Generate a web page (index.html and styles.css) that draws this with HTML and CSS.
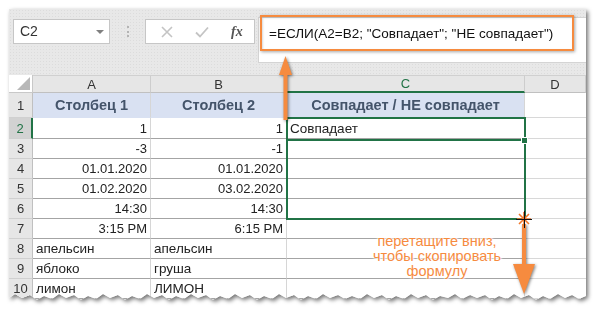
FILE: index.html
```html
<!DOCTYPE html>
<html lang="ru">
<head>
<meta charset="UTF-8">
<title>ЕСЛИ</title>
<link rel="stylesheet" href="styles.css">
</head>
<body>
<div class="scene">

<div class="shadow">
<div class="window">

    <div class="toolbar">
        <div class="name-box">C2<span class="caret"></span></div>
        <div class="sep"><span class="dots"></span></div>
        <div class="func-box">
            <svg class="ico" width="14" height="14" viewBox="0 0 14 14"><path d="M2 2L12 12M12 2L2 12" stroke="#c4c4c4" stroke-width="1.6" fill="none"/></svg>
            <svg class="ico" width="16" height="14" viewBox="0 0 16 14"><path d="M2 7.5L6 11.5L14 2.5" stroke="#c4c4c4" stroke-width="1.8" fill="none"/></svg>
            <span class="fx">fx</span>
        </div>
        <div class="formula">=ЕСЛИ(A2=B2; "Совпадает"; "НЕ совпадает")</div>
    </div>

    <div class="sheet">
        <div class="corner"></div>
        <div class="col-head">A</div>
        <div class="col-head">B</div>
        <div class="col-head active">C</div>
        <div class="col-head">D</div>

        <div class="row-head">1</div>
        <div class="cell title">Столбец 1</div>
        <div class="cell title">Столбец 2</div>
        <div class="cell title">Совпадает / НЕ совпадает</div>
        <div class="cell empty"></div>

        <div class="row-head active">2</div>
        <div class="cell num">1</div>
        <div class="cell num">1</div>
        <div class="cell">Совпадает</div>
        <div class="cell empty"></div>

        <div class="row-head">3</div>
        <div class="cell num">-3</div>
        <div class="cell num">-1</div>
        <div class="cell"></div>
        <div class="cell empty"></div>

        <div class="row-head">4</div>
        <div class="cell num">01.01.2020</div>
        <div class="cell num">01.01.2020</div>
        <div class="cell"></div>
        <div class="cell empty"></div>

        <div class="row-head">5</div>
        <div class="cell num">01.02.2020</div>
        <div class="cell num">03.02.2020</div>
        <div class="cell"></div>
        <div class="cell empty"></div>

        <div class="row-head">6</div>
        <div class="cell num">14:30</div>
        <div class="cell num">14:30</div>
        <div class="cell"></div>
        <div class="cell empty"></div>

        <div class="row-head">7</div>
        <div class="cell num">3:15 PM</div>
        <div class="cell num">6:15 PM</div>
        <div class="cell"></div>
        <div class="cell empty"></div>

        <div class="row-head">8</div>
        <div class="cell">апельсин</div>
        <div class="cell">апельсин</div>
        <div class="cell"></div>
        <div class="cell empty"></div>

        <div class="row-head">9</div>
        <div class="cell">яблоко</div>
        <div class="cell">груша</div>
        <div class="cell"></div>
        <div class="cell empty"></div>

        <div class="row-head">10</div>
        <div class="cell">лимон</div>
        <div class="cell">ЛИМОН</div>
        <div class="cell"></div>
        <div class="cell empty"></div>
    </div>

</div>
</div>

<!-- overlays -->
<div class="formula-mark"></div>
<div class="selection"><div class="active-cell"></div><span class="handle"></span></div>
<div class="hint">перетащите вниз,<br>чтобы скопировать<br>формулу</div>

<svg class="arrows" width="598" height="319" viewBox="0 0 598 319">
    <g class="arrow">
        <path d="M285.5 120V70" stroke="#f68b3f" stroke-width="4"/>
        <path d="M279 75L292 75L285.5 56Z" fill="#f68b3f"/>
        <path d="M524 224V268" stroke="#f68b3f" stroke-width="4"/>
        <path d="M513 264L535 264L524 294Z" fill="#f68b3f"/>
    </g>
    <g stroke="#f0782a" stroke-width="1.6">
        <path d="M519 214L529 224M529 214L519 224M524 212V226M517 219H531"/>
    </g>
    <path d="M516 219.5H532M524.5 211V228" stroke="#111" stroke-width="1"/>
</svg>

</div>
</body>
</html>
```

FILE: styles.css
```css
body {
    margin: 0;
    background: #fff;
    font-family: "Liberation Sans", Arial, sans-serif;
    font-size: 13px;
    color: #222;
}
.scene {
    position: relative;
    width: 598px;
    height: 319px;
    overflow: hidden;
}
.shadow {
    margin: 9px 0 0 9px;
    width: 577px;
    filter: drop-shadow(2px 2px 2px rgba(0, 0, 0, 0.55));
}
.window {
    height: 292px;
    background-color: #e8e8e8;
    background-image: radial-gradient(#dcdcdc 0.7px, transparent 0.9px);
    background-size: 3px 3px;
    clip-path: polygon(0 0, 577px 0, 577px 287px, 570px 290px, 563px 286px, 556px 289px, 549px 285px, 541px 290px, 534px 287px, 527px 291px, 520px 286px, 512px 289px, 505px 285px, 498px 290px, 490px 287px, 483px 291px, 476px 286px, 468px 289px, 461px 286px, 453px 290px, 446px 285px, 439px 289px, 431px 287px, 424px 291px, 417px 286px, 409px 289px, 402px 285px, 395px 290px, 387px 287px, 380px 291px, 373px 286px, 365px 289px, 358px 285px, 351px 290px, 343px 287px, 336px 290px, 329px 286px, 321px 289px, 314px 285px, 307px 290px, 299px 287px, 292px 291px, 285px 286px, 277px 289px, 270px 285px, 263px 290px, 255px 287px, 248px 291px, 241px 286px, 233px 289px, 226px 285px, 219px 290px, 211px 287px, 204px 291px, 197px 286px, 189px 289px, 182px 285px, 175px 290px, 167px 287px, 160px 291px, 153px 286px, 145px 289px, 138px 285px, 131px 290px, 123px 287px, 116px 291px, 109px 286px, 101px 289px, 94px 285px, 87px 290px, 79px 287px, 72px 291px, 65px 286px, 57px 289px, 50px 285px, 43px 290px, 35px 287px, 28px 291px, 21px 286px, 13px 289px, 6px 285px, 0 289px);
}
.toolbar {
    display: flex;
    align-items: flex-start;
    height: 54px;
    padding-left: 4px;
    margin-bottom: 12px;
}
.name-box {
    position: relative;
    box-sizing: border-box;
    width: 97px;
    height: 25px;
    margin-top: 10px;
    padding-left: 6px;
    line-height: 23px;
    font-size: 14px;
    color: #333;
    background: #fff;
    border: 1px solid #c6c6c6;
}
.caret {
    position: absolute;
    right: 5px;
    top: 10px;
    border-left: 4px solid transparent;
    border-right: 4px solid transparent;
    border-top: 4px solid #808080;
}
.sep {
    width: 35px;
    height: 25px;
    margin-top: 10px;
    display: flex;
    justify-content: center;
    align-items: center;
}
.dots {
    height: 11px;
    border-left: 2px dotted #b4b4b4;
}
.func-box {
    box-sizing: border-box;
    width: 110px;
    height: 25px;
    margin-top: 10px;
    display: flex;
    align-items: center;
    gap: 20px;
    padding-left: 14px;
    background: #fff;
    border: 1px solid #c6c6c6;
}
.fx {
    font-family: "Liberation Serif", serif;
    font-style: italic;
    font-weight: bold;
    font-size: 14px;
    color: #555;
    margin-left: 1px;
}
.formula {
    box-sizing: border-box;
    flex: 1;
    height: 46px;
    margin: 8px 0 0 3px;
    padding: 8px 0 0 10px;
    line-height: 16px;
    font-size: 13.5px;
    color: #111;
    background: #fff;
    border-top: 1px solid #d4d4d4;
    border-bottom: 1px solid #d4d4d4;
    border-left: 1px solid #d4d4d4;
}
.sheet {
    display: grid;
    grid-template-columns: 24px 118px 136px 238px 61px;
    grid-template-rows: 18px 25px 21px repeat(8, 20px);
    background: #fff;
}
.corner {
    position: relative;
    border-right: 1px solid #c8c8c8;
    border-bottom: 1px solid #c8c8c8;
}
.corner::after {
    content: "";
    position: absolute;
    right: 2px;
    bottom: 2px;
    border-left: 13px solid transparent;
    border-bottom: 13px solid #b8b8b8;
}
.col-head {
    display: flex;
    align-items: center;
    justify-content: center;
    color: #333;
    background: #e6e6e6;
    border-right: 1px solid #cdcdcd;
    border-bottom: 1px solid #c0c0c0;
    border-top: 1px solid #d0d0d0;
}
.col-head.active {
    color: #217346;
    border-bottom: 2px solid #217346;
}
.row-head {
    display: flex;
    align-items: center;
    justify-content: center;
    color: #333;
    background: #e6e6e6;
    border-right: 1px solid #c0c0c0;
    border-bottom: 1px solid #d0d0d0;
}
.row-head.active {
    color: #217346;
    background: #d2d2d2;
    border-right: 2px solid #217346;
}
.cell {
    display: flex;
    align-items: center;
    padding: 0 3px;
    white-space: nowrap;
    font-size: 13.5px;
    border-right: 1px solid #d6d6d6;
    border-bottom: 1px solid #a4a4a4;
}
.cell.num {
    justify-content: flex-end;
    font-size: 13px;
}
.cell.title {
    justify-content: center;
    font-weight: bold;
    font-size: 14.5px;
    color: #44546a;
    background: #d9e1f2;
    border-bottom: 1px solid #d9e1f2;
}
.cell.empty {
    border-right: none;
    border-bottom: 1px solid #d8d8d8;
}
.formula-mark {
    position: absolute;
    left: 260px;
    top: 15px;
    width: 310px;
    height: 32px;
    border: 2.5px solid #f68b3f;
    box-shadow: 1px 1px 3px rgba(0, 0, 0, 0.35), inset 1px 1px 2px rgba(0, 0, 0, 0.15);
}
.selection {
    position: absolute;
    left: 286px;
    top: 117px;
    width: 236px;
    height: 99px;
    border: 2px solid #217346;
}
.active-cell {
    height: 20px;
    width: 233px;
    border-bottom: 2px solid #217346;
}
.handle {
    position: absolute;
    right: -4px;
    top: 18px;
    width: 5px;
    height: 5px;
    background: #217346;
    border: 1px solid #fff;
}
.hint {
    position: absolute;
    left: 352px;
    top: 234px;
    width: 170px;
    text-align: center;
    line-height: 15px;
    font-size: 14.5px;
    color: #f68b3f;
    text-shadow: 0 0 2px #fff, 0 0 2px #fff, 0 0 3px #fff, 0 0 3px #fff;
}
.arrows {
    position: absolute;
    left: 0;
    top: 0;
}
.arrow {
    filter: drop-shadow(1px 1px 1.5px rgba(0, 0, 0, 0.5));
}
```
